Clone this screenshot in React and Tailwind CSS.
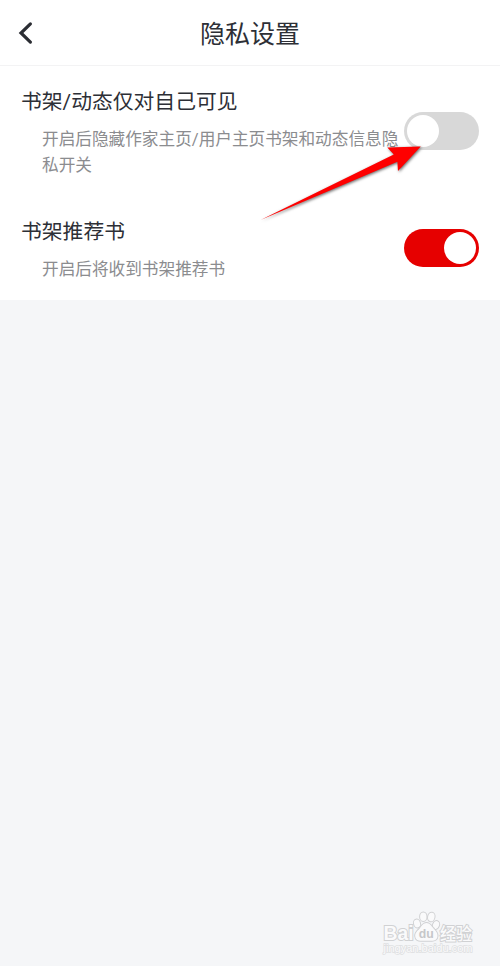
import React, { useState } from "react";

const settings = [
  {
    id: "private",
    title: "书架/动态仅对自己可见",
    desc: "开启后隐藏作家主页/用户主页书架和动态信息隐私开关",
    on: false,
  },
  {
    id: "recommend",
    title: "书架推荐书",
    desc: "开启后将收到书架推荐书",
    on: true,
  },
];

const App = () => {
  const [values, setValues] = useState(
    Object.fromEntries(settings.map((s) => [s.id, s.on]))
  );

  const toggle = (id) => setValues((v) => ({ ...v, [id]: !v[id] }));

  return (
    <div className="relative h-[966px] w-[500px] overflow-hidden bg-[#f5f6f8] font-[Roboto,'Noto_Sans_CJK_SC',sans-serif] text-[#2d2f36]">
      <header className="grid h-[66px] grid-cols-[50px_1fr_50px] items-center border-b border-[#f3f3f4] bg-white">
        <button type="button" aria-label="返回" className="pl-[18px]">
          <svg width="16" height="24" viewBox="0 0 16 24" fill="none">
            <path d="M12.4 2.9 3 12l9.4 9.1" stroke="#2b2d33" strokeWidth="3.2" strokeLinecap="round" />
          </svg>
        </button>
        <h1 className="pt-1 text-center text-[25px] leading-[30px]">隐私设置</h1>
      </header>

      <main className="bg-white">
        {settings.map((s) => (
          <SettingRow key={s.id} {...s} on={values[s.id]} onToggle={() => toggle(s.id)} />
        ))}
      </main>

      <Arrow />
      <Watermark />
    </div>
  );
};

const SettingRow = ({ title, desc, on, onToggle }) => (
  <section className="flex items-center px-[21px]">
    <div className="w-[383px] shrink-0 pt-[21px] pb-[17px]">
      <h2 className="text-[20.8px] leading-[30px]">{title}</h2>
      <p className="mt-2.5 ml-[21px] w-[362px] text-[16.65px] leading-[26px] text-[#8b8c8f]">
        {desc}
      </p>
    </div>
    <Switch on={on} onToggle={onToggle} />
  </section>
);

const Switch = ({ on, onToggle }) => (
  <button
    type="button"
    role="switch"
    aria-checked={on}
    onClick={onToggle}
    className={`flex h-[37.5px] w-[75px] items-center rounded-full px-[3px] ${
      on ? "justify-end bg-[#e60000]" : "justify-start bg-[#d8d8d8]"
    }`}
  >
    <span className="size-8 rounded-full bg-white" />
  </button>
);

const Arrow = () => (
  <svg
    className="pointer-events-none absolute top-[136px] left-[250px] drop-shadow-[1px_1px_1.5px_rgba(0,0,0,0.6)]"
    width="180"
    height="94"
    viewBox="250 136 180 94"
  >
    <path d="M260.5 219.9 393.8 154.6 387.3 147.6 420.8 146.4 398 170.9 397.4 161.8Z" fill="#fe0000" />
  </svg>
);

const Watermark = () => (
  <svg
    className="pointer-events-none absolute top-[906px] left-[378px]"
    width="100"
    height="54"
    viewBox="378 906 100 54"
    fill="#fafafb"
    stroke="#d0d1d3"
    strokeWidth="2"
    paintOrder="stroke"
  >
    <text x="383.5" y="940" fontSize="20" fontWeight="700" fontFamily="Liberation Sans, sans-serif" textLength="30" lengthAdjust="spacingAndGlyphs">
      Bai
    </text>
    {/* paw */}
    <g strokeWidth="2">
      <ellipse cx="417" cy="923.5" rx="3" ry="4" transform="rotate(-15 417 923.5)" />
      <ellipse cx="423.3" cy="916.7" rx="3.2" ry="4.3" />
      <ellipse cx="431.3" cy="917" rx="3.2" ry="4.3" transform="rotate(12 431.3 917)" />
      <ellipse cx="436" cy="925" rx="3" ry="4" transform="rotate(20 436 925)" />
      <path d="M426.5 923c3.3 0 4.8 2.8 6.8 5.3 2.2 2.4 4.4 4.3 4.2 7.6-.2 3.7-3 5-6.2 4.8h-9.6c-3.4.2-6.3-1-6.5-4.7-.2-3.3 2.3-5.2 4.5-7.6 2-2.5 3.5-5.4 6.8-5.4Z" />
    </g>
    <text x="418.7" y="937.5" fontSize="12.5" fontWeight="700" fontFamily="Liberation Sans, sans-serif" fill="#c6c7c9" stroke="none" textLength="15" lengthAdjust="spacingAndGlyphs">
      du
    </text>
    <text x="440" y="939.5" fontSize="17" fontWeight="500" fontFamily="Noto Sans CJK SC, sans-serif" textLength="32" lengthAdjust="spacingAndGlyphs">
      经验
    </text>
    <text x="383.5" y="952" fontSize="11" fontFamily="Liberation Sans, sans-serif" stroke="#dedfe1" strokeWidth="1.5" textLength="89" lengthAdjust="spacingAndGlyphs">
      jingyan.baidu.com
    </text>
  </svg>
);

export default App;
